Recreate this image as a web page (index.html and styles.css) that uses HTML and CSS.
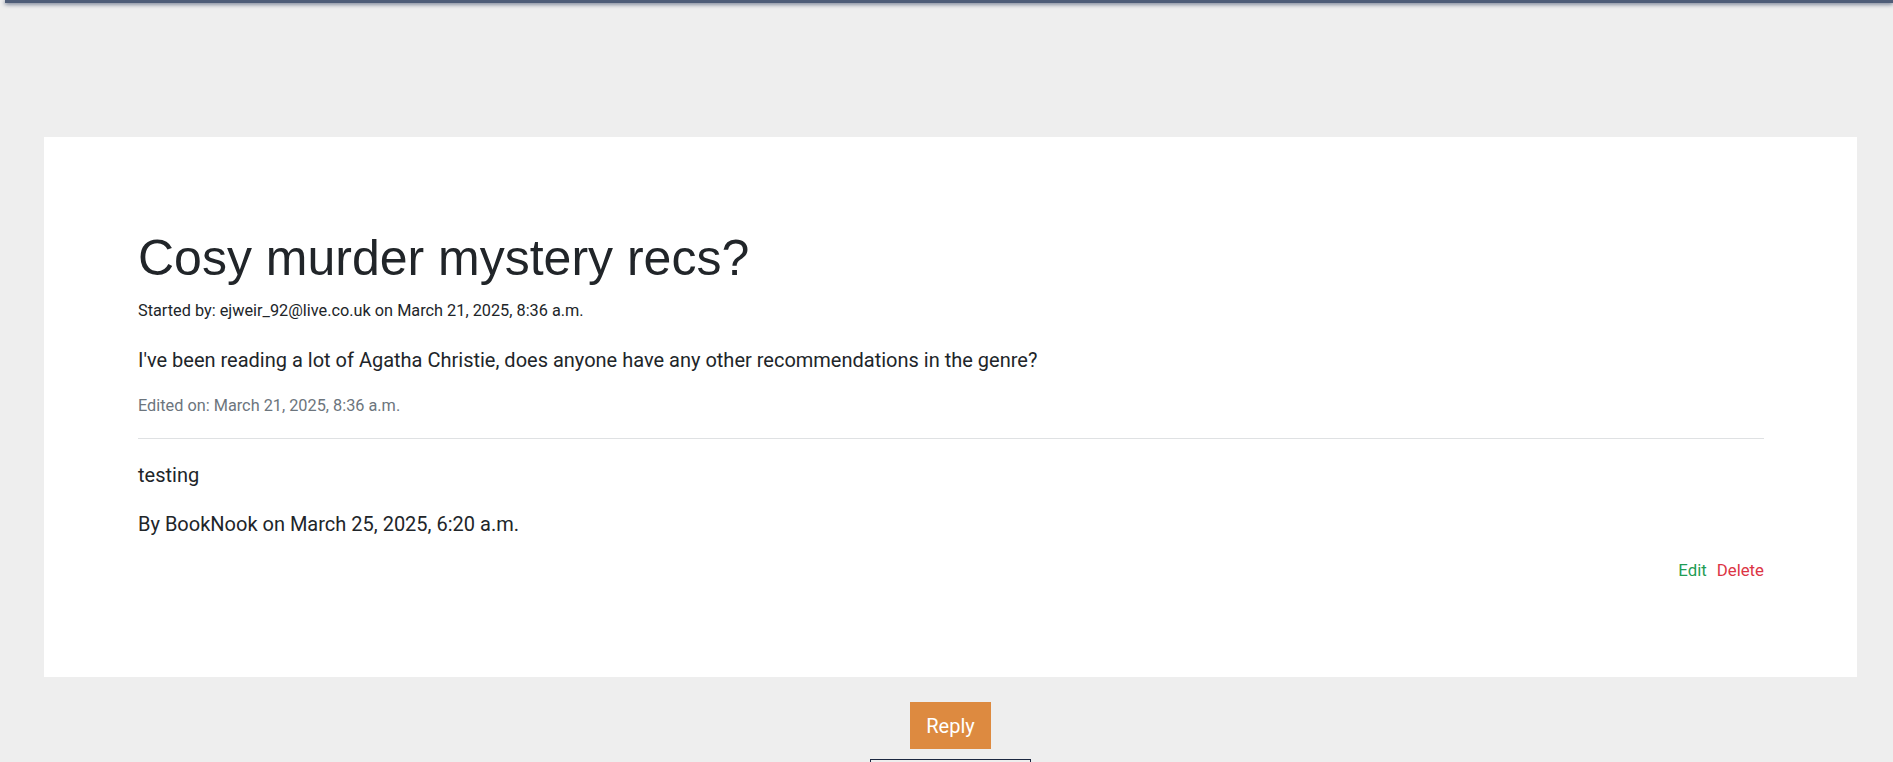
FILE: index.html
```html
<!DOCTYPE html>
<html lang="en">
<head>
<meta charset="utf-8">
<title>Cosy murder mystery recs?</title>
<link rel="stylesheet" href="styles.css">
</head>
<body>
<div class="topbar"></div>
<main class="page">
  <article class="card">
    <h1 class="title">Cosy murder mystery recs?</h1>
    <p class="meta">Started by: ejweir_92@live.co.uk on March 21, 2025, 8:36 a.m.</p>
    <p class="body lead">I've been reading a lot of Agatha Christie, does anyone have any other recommendations in the genre?</p>
    <p class="edited">Edited on: March 21, 2025, 8:36 a.m.</p>
    <hr class="rule">
    <div class="comment">
      <p class="body">testing</p>
      <p class="body byline">By BookNook on March 25, 2025, 6:20 a.m.</p>
      <div class="actions">
        <a class="edit" href="#">Edit</a>
        <a class="delete" href="#">Delete</a>
      </div>
    </div>
  </article>
  <div class="reply-wrap">
    <button class="reply" type="button">Reply</button>
    <div class="reply-form"></div>
  </div>
</main>
</body>
</html>
```
FILE: styles.css
```css
html, body {
  margin: 0;
  padding: 0;
}
body {
  background: #eeeeee;
  font-family: Roboto, "Liberation Sans", sans-serif;
  color: #212529;
  overflow: hidden;
  height: 762px;
}
.topbar {
  height: 3px;
  margin: 0 0 0 5px;
  background: #4f5d78;
  box-shadow: 0 1px 4px rgba(30, 45, 80, 0.8);
}
.page {
  padding-top: 134px;
}
.card {
  margin-left: 44px;
  width: 1813px;
  box-sizing: border-box;
  background: #ffffff;
  padding: 91px 93px 94px 94px;
}
.title {
  font-family: "Liberation Sans", Arial, sans-serif;
  font-weight: 400;
  font-size: 50px;
  line-height: 60px;
  margin: 0 0 11px 0;
  color: #212529;
}
.meta {
  font-size: 16.3px;
  line-height: 24.45px;
  margin: 0 0 21.5px 0;
}
.body {
  font-size: 20px;
  line-height: 30px;
  margin: 0;
}
.lead {
  margin-bottom: 19px;
}
.edited {
  font-size: 16.3px;
  line-height: 24.45px;
  margin: 0;
  color: #6c757d;
}
.rule {
  border: 0;
  border-top: 1px solid #dfe1e3;
  margin: 20px 0 21px 0;
}
.comment .body {
  margin-bottom: 19px;
}
.comment .byline {
  margin-bottom: 18.5px;
}
.actions {
  display: flex;
  justify-content: flex-end;
  gap: 10px;
  font-size: 16.8px;
  line-height: 25.2px;
}
.actions a {
  text-decoration: none;
}
.edit { color: #1f9d55; }
.delete { color: #dc3545; }
.reply-wrap {
  width: 1813px;
  margin-left: 44px;
  display: flex;
  flex-direction: column;
  align-items: center;
  padding-top: 25px;
}
.reply {
  width: 81px;
  height: 47px;
  border: 0;
  border-radius: 0;
  background: #dd8a40;
  color: #ffffff;
  font-family: Roboto, sans-serif;
  font-size: 20px;
  padding: 0;
}
.reply-form {
  margin-top: 10px;
  width: 161px;
  height: 40px;
  box-sizing: border-box;
  border: 1px solid #1b2740;
}
```
